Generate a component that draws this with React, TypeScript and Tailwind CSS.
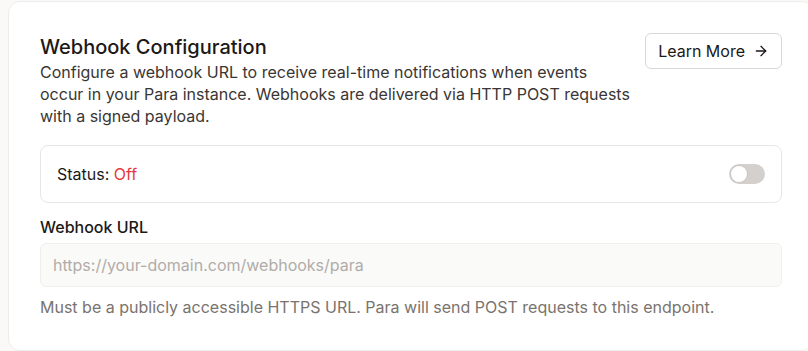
import { ArrowRight } from 'lucide-react';

// Webhook settings card: header with help link, status row, and the URL field.
export default function App() {
  return (
    <div className="h-[351px] w-[808px] overflow-hidden bg-[#faf9f7] pl-2 pt-px font-['Inter',sans-serif] text-[#1c1917]">
      <section className="w-[806px] rounded-xl border border-[#efedeb] bg-white p-[31px]">
        <div className="flex items-start justify-between gap-1">
          <div className="w-[600px] shrink-0">
            <h2 className="text-xl leading-7 font-medium">Webhook Configuration</h2>
            <p className="text-base leading-[22px] text-[#3a3633]">
              Configure a webhook URL to receive real-time notifications when events
              <br />
              occur in your Para instance. Webhooks are delivered via HTTP POST requests
              <br />
              with a signed payload.
            </p>
          </div>
          <button
            type="button"
            className="inline-flex h-[36px] shrink-0 items-center gap-2 rounded-md border border-[#dad7d4] bg-white px-3 text-base"
          >
            Learn More
            <ArrowRight size={16} strokeWidth={2} />
          </button>
        </div>

        <div className="mt-[18px] flex items-center justify-between rounded-lg border border-[#e9e7e5] px-4 py-4">
          <p className="text-base leading-6">
            Status: <span className="text-[#e5383b]">Off</span>
          </p>
          <span className="flex h-5 w-9 items-center rounded-full bg-[#d4d0cd] p-0.5">
            <span className="h-4 w-4 rounded-full bg-white shadow-[0_0_0_1px_#c9c5c2]" />
          </span>
        </div>

        <label className="mt-3 block text-base leading-6 font-medium">Webhook URL</label>
        <input
          type="text"
          placeholder="https://your-domain.com/webhooks/para"
          className="mt-1 block h-11 w-full rounded-md border border-[#f1efed] bg-[#fafaf9] px-3 text-base placeholder:text-[#b1aca8] focus:outline-none"
        />
        <p className="mt-2 text-base leading-6 text-[#7a736e]">
          Must be a publicly accessible HTTPS URL. Para will send POST requests to this endpoint.
        </p>
      </section>
    </div>
  );
}
